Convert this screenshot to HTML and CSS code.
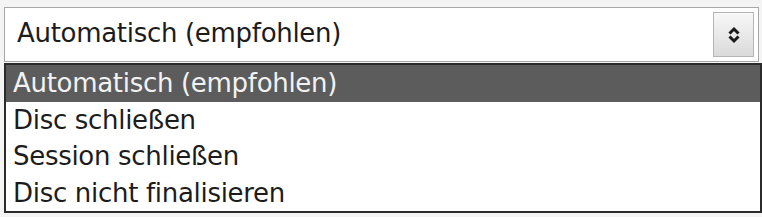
FILE: index.html
```html
<!DOCTYPE html>
<html lang="de">
<head>
    <meta charset="UTF-8">
    <title>Finalisierung</title>
    <link rel="stylesheet" href="styles.css">
</head>
<body>

    <!-- Kombinationsfeld mit geöffneter Liste -->
    <div class="combo">
        <div class="combo-field">
            <span class="combo-value">Automatisch (empfohlen)</span>
            <span class="combo-button">
                <svg width="14" height="20" viewBox="0 0 14 20">
                    <path d="M2.5 8.5 L7 4 L11.5 8.5" fill="none" stroke="#1a1a1a" stroke-width="3"/>
                    <path d="M2.5 11.5 L7 16 L11.5 11.5" fill="none" stroke="#1a1a1a" stroke-width="3"/>
                </svg>
            </span>
        </div>
        <ul class="combo-list">
            <li class="selected">Automatisch (empfohlen)</li>
            <li>Disc schließen</li>
            <li>Session schließen</li>
            <li>Disc nicht finalisieren</li>
        </ul>
    </div>

</body>
</html>
```

FILE: styles.css
```css
body {
    margin: 0;
    background-color: #f4f4f4;
    font-family: 'DejaVu Sans', 'Liberation Sans', sans-serif;
    font-size: 26px;
    letter-spacing: -0.3px;
    color: #1c1c1c;
}

.combo {
    padding: 7px 0 0 4px;
}

.combo-field {
    display: flex;
    align-items: center;
    box-sizing: border-box;
    width: 755px;
    height: 55px;
    padding: 0 4px 0 12px;
    background-color: #fff;
    border: 1px solid #a8a8a8;
}

.combo-value {
    padding-bottom: 3px;
}

.combo-button {
    display: flex;
    align-items: center;
    justify-content: center;
    box-sizing: border-box;
    width: 41px;
    height: 45px;
    margin-left: auto;
    border: 1px solid #b4b4b4;
    background: linear-gradient(#f8f8f8, #dadada);
}

.combo-list {
    list-style: none;
    margin: 1px 0 0 0;
    padding: 0;
    box-sizing: border-box;
    width: 758px;
    background-color: #fff;
    border: 2px solid #2b2b2b;
}

.combo-list li {
    height: 36.5px;
    line-height: 36.5px;
    padding-left: 7px;
}

.combo-list li.selected {
    background-color: #5c5c5c;
    color: #f2f2f2;
}
```
